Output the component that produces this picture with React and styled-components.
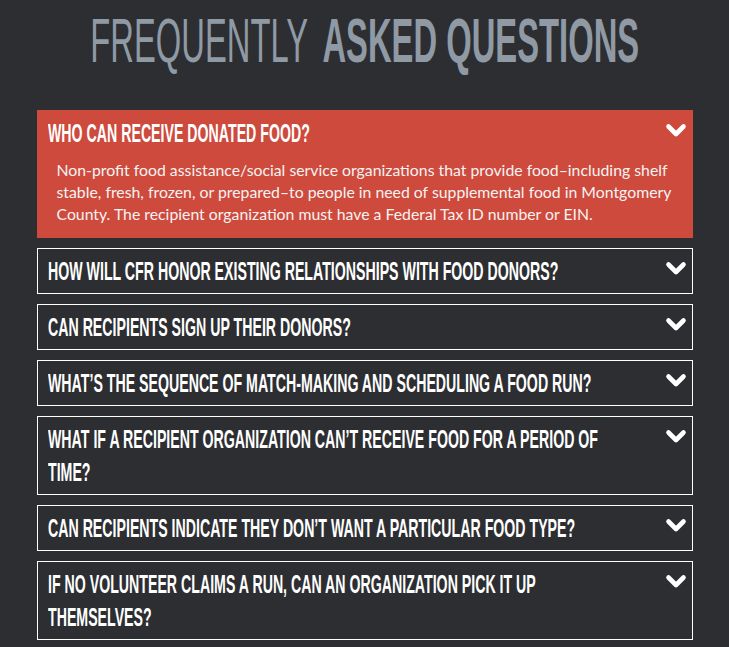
import React from 'react'
import styled, { createGlobalStyle } from 'styled-components'

const GlobalStyle = createGlobalStyle`
    body {
        margin: 0;
        background-color: #2d2e32;
        overflow-x: hidden;
    }
`

const Page = styled.div`
    padding: 9px 0 30px 0;
`

const Title = styled.h1`
    display: flex;
    justify-content: center;
    margin: 0 0 38px 0;
    font-family: "Liberation Sans", sans-serif;
    font-size: 63px;
    line-height: 63px;
    color: #8f9aa5;
    white-space: nowrap;
`

const TitleInner = styled.span`
    display: inline-block;
    transform: scaleX(0.52);
    transform-origin: center top;
`

const Light = styled.span`
    font-weight: 400;
`

const Strong = styled.span`
    font-weight: 700;
    margin-left: 10px;
`

const List = styled.div`
    max-width: 656px;
    margin: 0 auto;
    display: flex;
    flex-direction: column;
    gap: 10px;
`

const Item = styled.div`
    border: 1px solid ${(p) => (p.open ? '#cd4a3d' : '#ffffff')};
    background-color: ${(p) => (p.open ? '#cd4a3d' : 'transparent')};
`

const Header = styled.div`
    display: flex;
    align-items: flex-start;
    padding: 6px 5px 5px 10px;
    cursor: pointer;
`

const QuestionBox = styled.div`
    flex: 1;
    min-width: 0;
    overflow: hidden;
`

const Question = styled.span`
    display: block;
    width: calc(575px / 0.545);
    transform: scaleX(0.545);
    transform-origin: 0 0;
    font-family: "Liberation Sans", sans-serif;
    font-weight: 700;
    font-size: 26px;
    line-height: 33px;
    color: #ffffff;
    text-transform: uppercase;
`

const Chevron = styled.svg`
    flex: none;
    margin-top: 6px;
`

const Answer = styled.p`
    margin: 0;
    padding: 4px 16px 12px 19px;
    font-family: Lato, "Open Sans", sans-serif;
    font-size: 15.8px;
    line-height: 22px;
    color: #f7f3f2;
`

const faqs = [
    {
        q: 'Who can receive donated food?',
        a: 'Non-profit food assistance/social service organizations that provide food–including shelf stable, fresh, frozen, or prepared–to people in need of supplemental food in Montgomery County. The recipient organization must have a Federal Tax ID number or EIN.',
    },
    { q: 'How will CFR honor existing relationships with food donors?' },
    { q: 'Can recipients sign up their donors?' },
    { q: 'What’s the sequence of match-making and scheduling a food run?' },
    { q: 'What if a recipient organization can’t receive food for a period of time?' },
    { q: 'Can recipients indicate they don’t want a particular food type?' },
    { q: 'If no volunteer claims a run, can an organization pick it up themselves?' },
]

const ChevronIcon = () => (
    <Chevron width="22" height="15" viewBox="0 0 22 15">
        <polyline
            points="3.5,3.5 11,11 18.5,3.5"
            fill="none"
            stroke="#ffffff"
            strokeWidth="4.6"
            strokeLinecap="round"
            strokeLinejoin="round"
        />
    </Chevron>
)

export default function App() {
    return (
        <Page>
            <GlobalStyle />
            <Title>
                <TitleInner>
                    <Light>FREQUENTLY</Light> <Strong>ASKED QUESTIONS</Strong>
                </TitleInner>
            </Title>
            <List>
                {faqs.map((item, i) => (
                    <Item key={i} open={i === 0}>
                        <Header>
                            <QuestionBox>
                                <Question>{item.q}</Question>
                            </QuestionBox>
                            <ChevronIcon />
                        </Header>
                        {i === 0 && <Answer>{item.a}</Answer>}
                    </Item>
                ))}
            </List>
        </Page>
    )
}
